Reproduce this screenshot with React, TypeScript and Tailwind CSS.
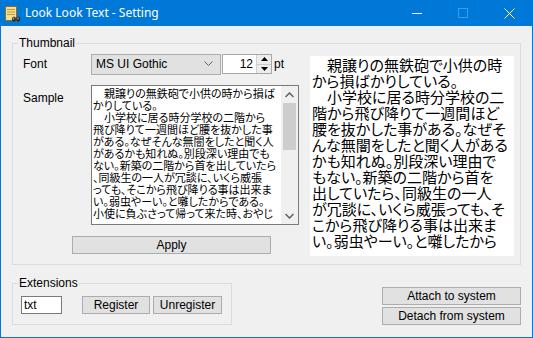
const sampleLines = [
  "　親譲りの無鉄砲で小供の時から損ば",
  "かりしている。",
  "　小学校に居る時分学校の二階から",
  "飛び降りて一週間ほど腰を抜かした事",
  "がある。なぜそんな無闇をしたと聞く人",
  "があるかも知れぬ。別段深い理由でも",
  "ない。新築の二階から首を出していたら",
  "、同級生の一人が冗談に、いくら威張",
  "っても、そこから飛び降りる事は出来ま",
  "い。弱虫やーい。と囃したからである。",
  "小使に負ぶさって帰って来た時、おやじ",
];

const previewLines = [
  "　親譲りの無鉄砲で小供の時",
  "から損ばかりしている。",
  "　小学校に居る時分学校の二",
  "階から飛び降りて一週間ほど",
  "腰を抜かした事がある。なぜそ",
  "んな無闇をしたと聞く人がある",
  "かも知れぬ。別段深い理由で",
  "もない。新築の二階から首を",
  "出していたら、同級生の一人",
  "が冗談に、いくら威張っても、そ",
  "こから飛び降りる事は出来ま",
  "い。弱虫やーい。と囃したから",
];

const ui = "font-['Liberation_Sans','Noto_Sans_CJK_JP',sans-serif] text-[12px] text-black";
const jp = "font-['Noto_Sans_CJK_JP',sans-serif] [font-feature-settings:'palt']";

function Button({ label, className }: { label: string; className: string }) {
  return (
    <div className={`flex items-center justify-center bg-[#e1e1e1] border border-[#adadad] leading-none ${className}`}>
      {label}
    </div>
  );
}

function AppIcon() {
  return (
    <svg width="17" height="17" viewBox="0 0 17 17">
      <rect x="1.5" y="1.5" width="11" height="14" fill="#f6df8e" stroke="#8a6d2c" />
      <line x1="3" y1="4.5" x2="11" y2="4.5" stroke="#b89a48" />
      <line x1="3" y1="7" x2="11" y2="7" stroke="#b89a48" />
      <line x1="3" y1="9.5" x2="11" y2="9.5" stroke="#b89a48" />
      <ellipse cx="10" cy="14" rx="2" ry="2.6" fill="#222" />
      <ellipse cx="14.2" cy="14" rx="2" ry="2.6" fill="#222" />
      <rect x="9.3" y="12.5" width="1" height="2" fill="#ddd" />
      <rect x="13.5" y="12.5" width="1" height="2" fill="#ddd" />
    </svg>
  );
}

export default function App() {
  return (
    <div className={`w-[533px] h-[338px] bg-[#0078d7] flex flex-col px-px pb-px overflow-hidden ${ui}`}>
      {/* title bar */}
      <div className="h-[26px] flex items-center text-white shrink-0">
        <div className="ml-[3px] mt-px">
          <AppIcon />
        </div>
        <div className="ml-[4px] font-['Noto_Sans',sans-serif] text-[12px] mt-[-1px]">Look Look Text - Setting</div>
        <div className="ml-auto flex h-full">
          <div className="w-[46px] flex items-center justify-center">
            <div className="w-[10px] h-px bg-white" />
          </div>
          <div className="w-[46px] flex items-center justify-center">
            <div className="w-[10px] h-[10px] border border-[#3f9be3]" />
          </div>
          <div className="w-[46px] flex items-center justify-center">
            <svg width="11" height="11" viewBox="0 0 11 11">
              <path d="M0.5 0.5 L10.5 10.5 M10.5 0.5 L0.5 10.5" stroke="white" strokeWidth="1" />
            </svg>
          </div>
        </div>
      </div>

      {/* client area */}
      <div className="flex-1 bg-[#f0f0f0] flex flex-col pl-[11px] pr-[11px]">
        {/* Thumbnail group */}
        <div className="relative mt-[17px] w-[509px] h-[222px] border border-[#dcdcdc] flex">
          <span className="absolute left-[5px] top-[-8px] px-[1px] bg-[#f0f0f0] leading-[14px]">Thumbnail</span>

          <div className="w-[286px] flex flex-col">
            {/* font row */}
            <div className="flex items-center mt-[9px] ml-[10px] h-[22px]">
              <div className="w-[68px]">Font</div>
              <div className="w-[130px] h-[21px] bg-[#e1e1e1] border border-[#adadad] flex items-center pl-[4px]">
                <span>MS UI Gothic</span>
                <svg className="ml-auto mr-[7px]" width="9" height="6" viewBox="0 0 9 6">
                  <path d="M0.5 0.5 L4.5 4.5 L8.5 0.5" fill="none" stroke="#606060" />
                </svg>
              </div>
              <div className="ml-px w-[50px] h-[20px] bg-white border border-[#a8a8a8] flex items-center">
                <span className="flex-1 text-right pr-[3px]">12</span>
                <div className="w-[15px] h-full flex flex-col border-l border-[#d0d0d0]">
                  <div className="flex-1 flex items-center justify-center bg-[#ececec] border-b border-[#c8c8c8]">
                    <svg width="7" height="4" viewBox="0 0 7 4"><path d="M3.5 0 L7 4 L0 4 Z" fill="#000" /></svg>
                  </div>
                  <div className="flex-1 flex items-center justify-center bg-[#ececec]">
                    <svg width="7" height="4" viewBox="0 0 7 4"><path d="M0 0 L7 0 L3.5 4 Z" fill="#000" /></svg>
                  </div>
                </div>
              </div>
              <span className="ml-[2px]">pt</span>
            </div>

            {/* sample row */}
            <div className="flex mt-[10px] ml-[10px]">
              <div className="w-[68px] pt-[4px]">Sample</div>
              <div className="w-[208px] h-[140px] bg-white border border-[#7a7a7a] flex">
                <div className={`flex-1 overflow-hidden pl-[1px] pt-[1px] text-[11px] leading-[12px] ${jp}`}>
                  {sampleLines.map((l, i) => (
                    <div key={i} className="whitespace-nowrap">{l}</div>
                  ))}
                </div>
                <div className="w-[17px] h-full bg-[#f0f0f0] flex flex-col items-center">
                  <div className="h-[17px] flex items-center justify-center">
                    <svg width="9" height="6" viewBox="0 0 9 6"><path d="M0.5 5 L4.5 1 L8.5 5" fill="none" stroke="#606060" strokeWidth="1.5" /></svg>
                  </div>
                  <div className="w-[13px] h-[47px] bg-[#cdcdcd]" />
                  <div className="mt-auto h-[17px] flex items-center justify-center">
                    <svg width="9" height="6" viewBox="0 0 9 6"><path d="M0.5 1 L4.5 5 L8.5 1" fill="none" stroke="#606060" strokeWidth="1.5" /></svg>
                  </div>
                </div>
              </div>
            </div>

            <Button label="Apply" className="mt-[11px] ml-[59px] w-[199px] h-[18px]" />
          </div>

          {/* preview */}
          <div className={`mt-[12px] ml-[11px] w-[204px] h-[200px] bg-white overflow-hidden pl-[2px] pt-[1px] text-[15px] leading-[16px] ${jp}`}>
            {previewLines.map((l, i) => (
              <div key={i} className="whitespace-nowrap">{l}</div>
            ))}
          </div>
        </div>

        {/* bottom row */}
        <div className="flex items-start justify-between mt-[18px]">
          <div className="relative w-[220px] h-[42px] border border-[#dcdcdc] flex items-start pt-[12px] pl-[8px]">
            <span className="absolute left-[5px] top-[-8px] px-[1px] bg-[#f0f0f0] leading-[14px]">Extensions</span>
            <div className="w-[41px] h-[18px] bg-white border border-[#7a7a7a] flex items-center pl-[2px] leading-none">txt</div>
            <Button label="Register" className="ml-[20px] w-[68px] h-[18px]" />
            <Button label="Unregister" className="ml-[3px] w-[69px] h-[18px]" />
          </div>
          <div className="flex flex-col gap-[2px] mt-[4px]">
            <Button label="Attach to system" className="w-[139px] h-[18px]" />
            <Button label="Detach from system" className="w-[139px] h-[18px]" />
          </div>
        </div>
      </div>
    </div>
  );
}
